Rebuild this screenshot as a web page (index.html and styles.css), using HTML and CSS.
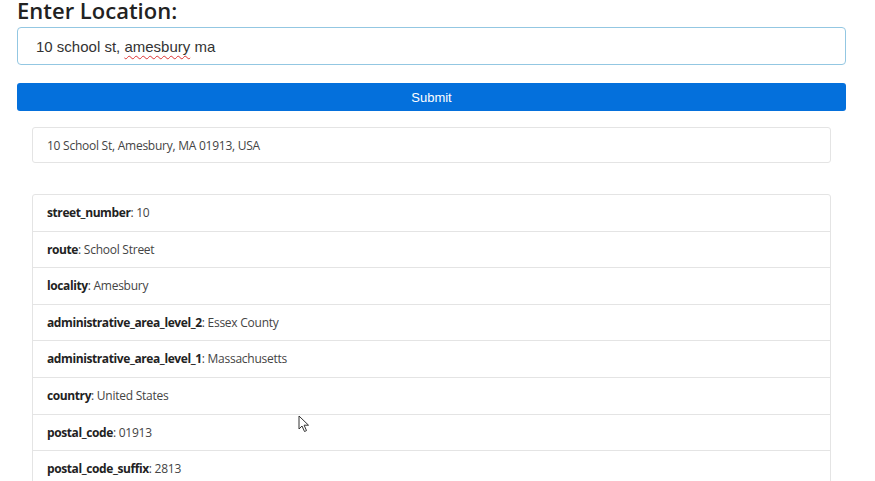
FILE: index.html
```html
<!DOCTYPE html>
<html lang="en">
<head>
<meta charset="utf-8">
<title>Enter Location</title>
<link rel="stylesheet" href="styles.css">
</head>
<body>
<div class="page">
  <h2 class="title">Enter Location:</h2>
  <div class="field" role="textbox"><span class="value">10 school st, <span class="misspelled">amesbury</span> ma</span></div>
  <button class="submit" type="button">Submit</button>
  <div class="results">
    <div class="card address">10 School St, Amesbury, MA 01913, USA</div>
    <ul class="card list">
      <li class="row"><b>street_number</b>: 10</li>
      <li class="row"><b>route</b>: School Street</li>
      <li class="row"><b>locality</b>: Amesbury</li>
      <li class="row"><b>administrative_area_level_2</b>: Essex County</li>
      <li class="row"><b>administrative_area_level_1</b>: Massachusetts</li>
      <li class="row"><b>country</b>: United States</li>
      <li class="row"><b>postal_code</b>: 01913</li>
      <li class="row"><b>postal_code_suffix</b>: 2813</li>
    </ul>
  </div>
</div>
<svg class="cursor" width="12" height="18" viewBox="0 0 12 18" aria-hidden="true">
  <path d="M1 1 L1 14 L4 11 L6.5 16.5 L8.5 15.6 L6.1 10.2 L10.5 10.2 Z" fill="#fff" stroke="#333" stroke-width="1" stroke-linejoin="round"/>
</svg>
</body>
</html>
```
FILE: styles.css
```css
html, body {
  margin: 0;
  padding: 0;
  background: #fff;
  overflow: hidden;
}
body {
  width: 875px;
  height: 481px;
  position: relative;
  font-family: "Open Sans", "Noto Sans", sans-serif;
  color: #212529;
}
.page {
  width: 829px;
  margin-left: 17px;
  display: flex;
  flex-direction: column;
}
.title {
  margin: -3px 0 0 0;
  font-size: 22px;
  line-height: 27px;
  font-weight: 600;
  color: #222;
}
.field {
  margin-top: 3px;
  height: 38px;
  box-sizing: border-box;
  border: 1px solid #93c7e2;
  border-radius: 4px;
  padding: 0 18px;
  line-height: 37px;
  font-family: "Liberation Sans", Arial, sans-serif;
  font-size: 15px;
  color: #333;
  white-space: pre;
}
.misspelled {
  text-decoration: underline wavy #d33;
  text-decoration-thickness: 1px;
  text-underline-offset: 3px;
}
.submit {
  margin-top: 18px;
  height: 28px;
  border: 0;
  border-radius: 3px;
  background: #0470dc;
  color: #fff;
  font-family: "Liberation Sans", Arial, sans-serif;
  font-size: 13px;
  padding: 0;
}
.results {
  margin: 16px 15px 0;
  display: flex;
  flex-direction: column;
  gap: 31px;
}
.card {
  border: 1px solid #e4e4e4;
  border-radius: 3px;
  background: #fff;
  font-size: 12px;
  letter-spacing: -0.25px;
  color: #444;
}
.address {
  height: 36px;
  box-sizing: border-box;
  padding: 0 14px;
  line-height: 35px;
}
.list {
  list-style: none;
  margin: 0;
  padding: 0;
}
.row {
  padding: 9px 14px;
  line-height: 17.6px;
  border-top: 1px solid #e4e4e4;
}
.row:first-child {
  border-top: 0;
}
.row b {
  font-weight: 700;
  letter-spacing: -0.4px;
  color: #222;
}
.cursor {
  position: absolute;
  left: 298px;
  top: 415px;
}
```
